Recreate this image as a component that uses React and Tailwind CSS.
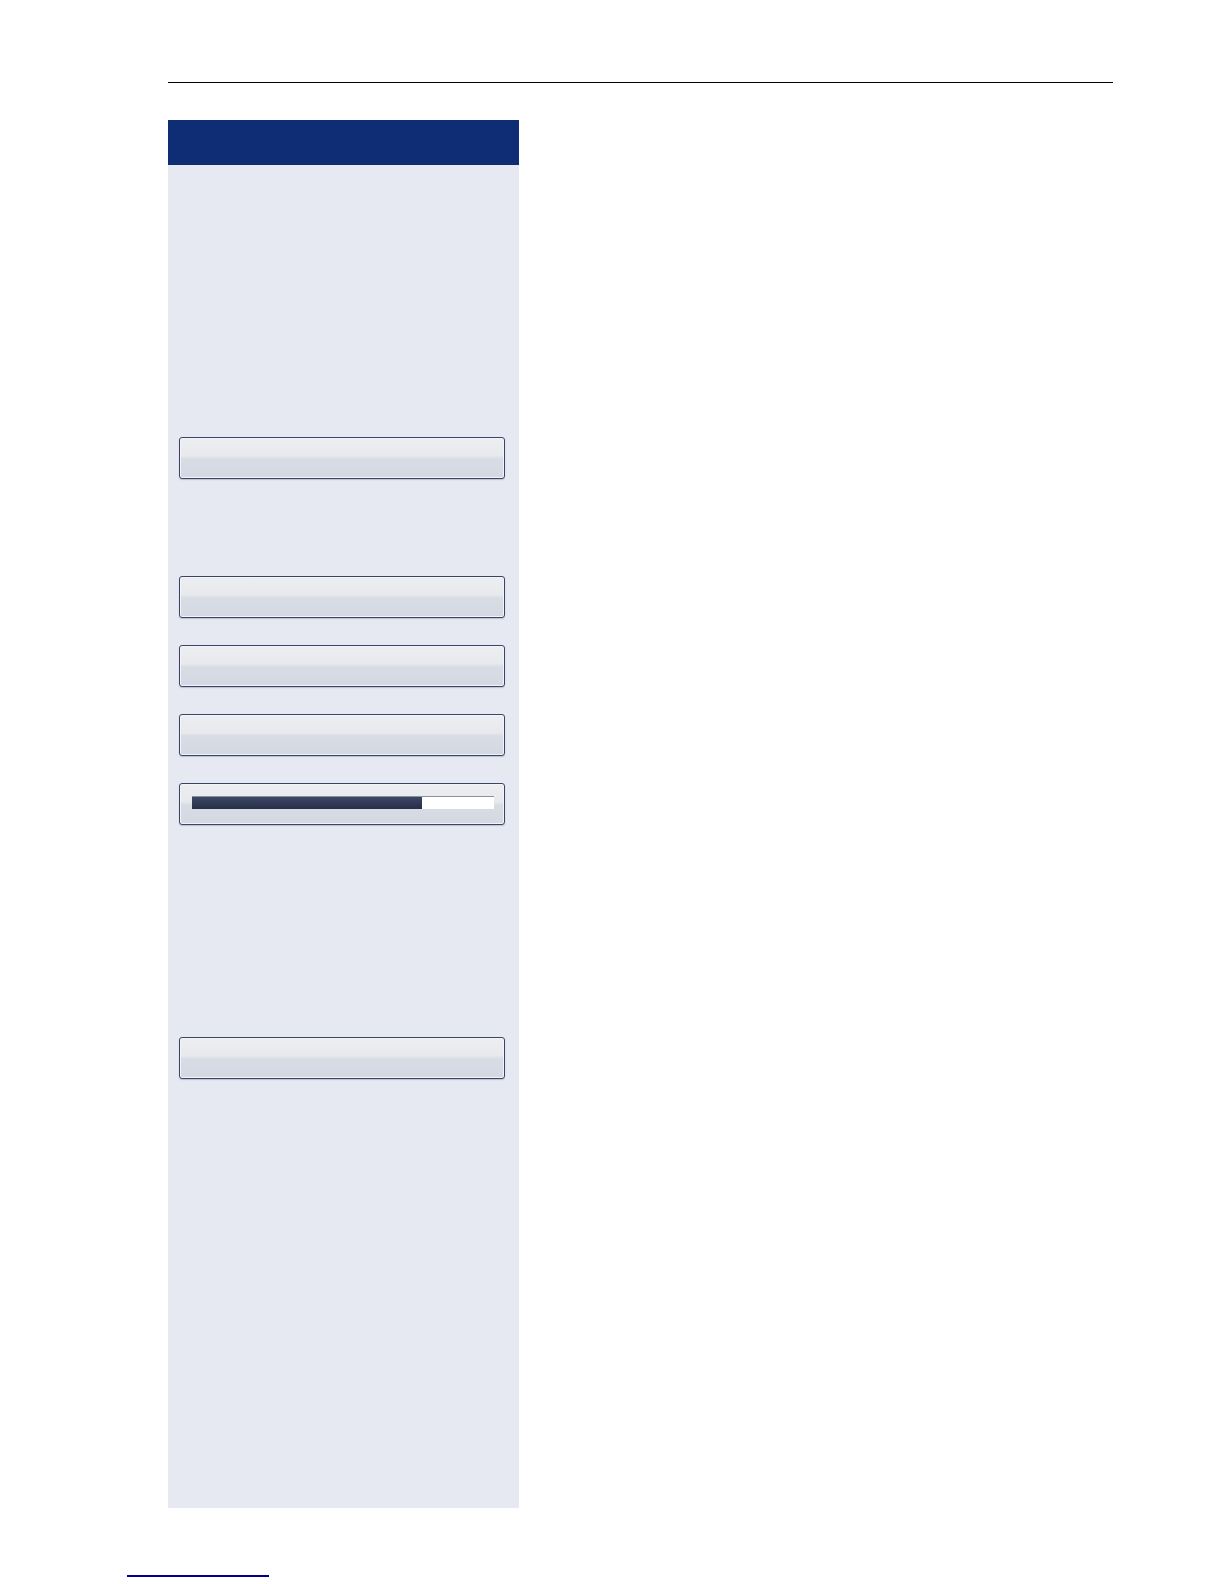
function Key({ children }) {
  return (
    <div className="h-[42px] w-[326px] rounded-[3px] border border-[#3a4566] bg-[linear-gradient(to_bottom,#eceef2_0%,#e7e9ed_45%,#d8dce5_52%,#d4d8e2_100%)] shadow-[inset_0_0_0_1px_#f3f4f7,0_1px_1px_rgba(60,70,100,0.25)]">
      {children}
    </div>
  )
}

function Progress({ value }) {
  return (
    <div className="ml-[12px] mt-[12px] w-[302px]">
      <div className="h-px bg-[#8b909d]" />
      <div className="flex h-[12px] bg-white">
        <div
          className="h-full bg-[linear-gradient(to_bottom,#3d4664,#262e48)]"
          style={{ width: `${value}%` }}
        />
      </div>
    </div>
  )
}

export default function App() {
  return (
    <div className="w-[1224px] h-[1584px] bg-white pt-[82px]">
      <div className="ml-[168px] w-[945px] h-px bg-black" />
      <div className="ml-[168px] mt-[37px] w-[351px]">
        <div className="h-[45px] bg-[#0e2d74]" />
        <div className="h-[1343px] bg-[#e6e9f2] pl-[11px] pt-[272px] flex flex-col">
          <Key />
          <div className="mt-[97px] flex flex-col gap-[27px]">
            <Key />
            <Key />
            <Key />
            <Key>
              <Progress value={76} />
            </Key>
          </div>
          <div className="mt-[212px]">
            <Key />
          </div>
        </div>
      </div>
      <div className="ml-[127px] mt-[67px] w-[142px] h-[2px] bg-[#00008f]" />
    </div>
  )
}
